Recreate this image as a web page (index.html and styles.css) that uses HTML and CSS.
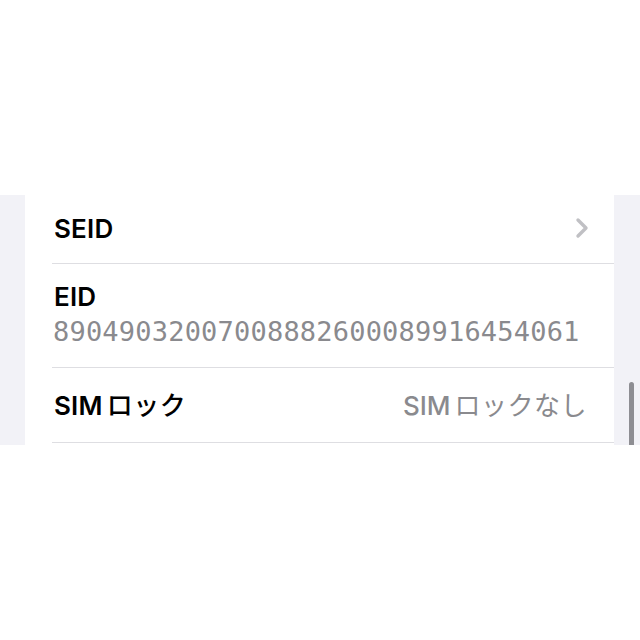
FILE: index.html
```html
<!DOCTYPE html>
<html lang="ja">
<head>
    <meta charset="UTF-8">
    <meta name="viewport" content="width=device-width, initial-scale=1.0">
    <title>情報</title>
    <link rel="stylesheet" href="styles.css">
</head>
<body>
    <div class="screen">
        <div class="card">
            <div class="row row-seid">
                <div class="row-inner">
                    <span class="label">SEID</span>
                    <svg class="chevron" width="16" height="24" viewBox="0 0 16 24">
                        <path d="M4 4 L12 12 L4 20" fill="none" stroke="#c0c0c4" stroke-width="3.4" stroke-linecap="round" stroke-linejoin="round"/>
                    </svg>
                </div>
            </div>
            <div class="row row-eid">
                <div class="row-inner stacked">
                    <span class="label">EID</span>
                    <span class="mono">89049032007008882600089916454061</span>
                </div>
            </div>
            <div class="row row-sim">
                <div class="row-inner">
                    <span class="label">SIM<span class="jp">ロック</span></span>
                    <span class="value">SIM<span class="jp">ロックなし</span></span>
                </div>
            </div>
        </div>
        <div class="scrollbar"></div>
    </div>
</body>
</html>
```
FILE: styles.css
```css
body {
    margin: 0;
    background-color: #ffffff;
    font-family: Inter, "Noto Sans CJK JP", sans-serif;
    color: #000000;
}
.screen {
    position: relative;
    margin-top: 195px;
    height: 250px;
    overflow: hidden;
    background-color: #f2f2f7;
    padding: 0 26px 0 25px;
}
.card {
    background-color: #ffffff;
    height: 100%;
}
.row {
    padding-left: 27px;
}
.row-inner {
    display: flex;
    align-items: center;
    justify-content: space-between;
    padding-right: 26px;
    border-bottom: 1px solid #dedee2;
}
.row-seid .row-inner {
    height: 68px;
}
.row-sim .row-inner {
    height: 74px;
}
.stacked {
    flex-direction: column;
    align-items: flex-start;
    justify-content: flex-start;
    gap: 3px;
    padding-top: 17px;
    padding-bottom: 19px;
}
.label {
    margin-left: 2px;
    font-size: 26px;
    line-height: 32px;
    font-weight: 600;
    letter-spacing: 0.2px;
}
.jp {
    font-family: "Noto Sans CJK JP", sans-serif;
    font-weight: 500;
    margin-left: 4px;
    letter-spacing: 0.5px;
}
.mono {
    margin-left: 1px;
    font-family: "DejaVu Sans Mono", monospace;
    font-size: 27px;
    line-height: 32px;
    color: #8a8a8e;
    letter-spacing: 0.2px;
}
.value {
    font-size: 26px;
    line-height: 32px;
    font-weight: 500;
    color: #8a8a8e;
    margin-right: 1px;
}
.value .jp {
    font-weight: 400;
}
.chevron {
    display: block;
    margin-top: -2px;
    margin-right: -2px;
}
.scrollbar {
    position: absolute;
    right: 6px;
    top: 187px;
    width: 5px;
    height: 70px;
    border-radius: 3px;
    background-color: #8e8e93;
}
```
